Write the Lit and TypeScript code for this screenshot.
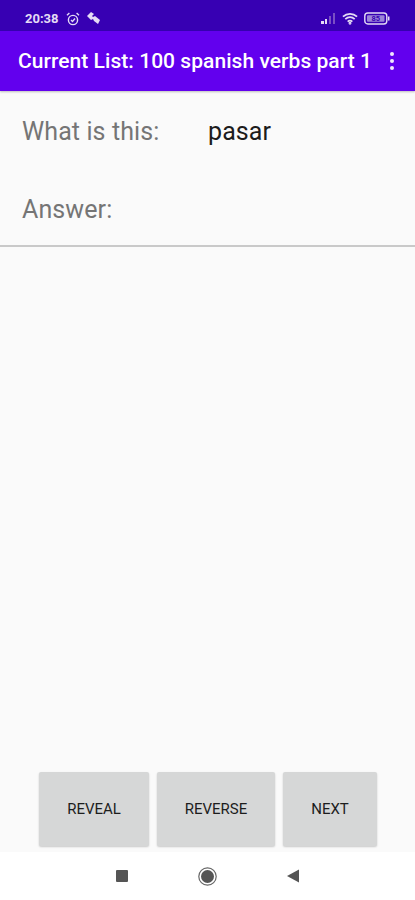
import { LitElement, html, css } from "lit";
import { customElement } from "lit/decorators.js";

@customElement("app-root")
export class AppRoot extends LitElement {
  static styles = css`
    :host {
      display: flex;
      flex-direction: column;
      width: 415px;
      height: 900px;
      background: #fafafa;
      font-family: Roboto, "Liberation Sans", sans-serif;
      overflow: hidden;
    }
    .status {
      height: 31px;
      flex: none;
      box-sizing: border-box;
      background: #3700b3;
      color: #e4dcf5;
      display: flex;
      align-items: center;
      padding: 6px 25px 0 25px;
      font-size: 13px;
      font-weight: 700;
    }
    .status .left { display: flex; align-items: center; flex: 1; gap: 7px; }
    .status .right { display: flex; align-items: center; gap: 6px; }
    .status svg { display: block; }
    .bar {
      height: 60px;
      flex: none;
      box-sizing: border-box;
      background: #6200ee;
      color: #fff;
      display: flex;
      align-items: center;
      justify-content: space-between;
      padding: 0 21px 0 18px;
      font-size: 21px;
      letter-spacing: 0.05px;
      font-weight: 500;
      box-shadow: 0 1px 2px rgba(0, 0, 0, 0.25);
      white-space: nowrap;
    }
    .dots { display: flex; flex-direction: column; gap: 2.500px; }
    .dots i { display: block; width: 4.500px; height: 4.500px; border-radius: 50%; background: #f1e8fd; }
    .form {
      flex: none;
      height: 156px;
      box-sizing: border-box;
      border-bottom: 2px solid #c9c9c9;
      padding: 0 22px;
      font-size: 25px;
      letter-spacing: 0.1px;
      color: #757575;
    }
    .row { display: flex; align-items: center; height: 76px; }
    .row.first { height: 80px; }
    .row .label { width: 186px; flex: none; }
    .row .value { color: #1c1c1c; }
    .spacer { flex: 1; }
    .buttons {
      flex: none;
      display: grid;
      grid-template-columns: 110px 118px 94px;
      gap: 8px;
      padding: 0 0 6px 39px;
    }
    .buttons button {
      height: 74px;
      border: none;
      border-radius: 2px;
      background: #d6d7d7;
      box-shadow: 0 1px 2px rgba(0, 0, 0, 0.2);
      font: 400 15px Roboto, "Liberation Sans", sans-serif;
      color: #1d1d1d;
      padding: 0;
    }
    .nav {
      flex: none;
      height: 48px;
      background: #fff;
      display: flex;
      align-items: center;
      padding-left: 116px;
      gap: 70px;
    }
    .nav svg { display: block; }
  `;

  render() {
    return html`
      <div class="status">
        <div class="left">
          <span>20:38</span>
          <svg width="14" height="14" viewBox="0 0 14 14" fill="none" stroke="#e4dcf5" stroke-width="1.4">
            <circle cx="7" cy="8" r="4.600" />
            <path d="M1 3.200 3.400 1M13 3.200 10.600 1M5 8l1.500 1.500L9 6.500" />
          </svg>
          <svg width="14" height="13" viewBox="0 0 14 13" fill="#e4dcf5">
            <path d="M0 4 4 0l3 2-2 2 1 1 2-1 5 4-2 4-4-3-1-2-2 1z" />
          </svg>
        </div>
        <div class="right">
          <svg width="16" height="13" viewBox="0 0 16 13">
            <path d="M1 12h3V9H1z" fill="#e4dcf5" />
            <path d="M5 12h2V7H5z" fill="#e4dcf5" />
            <path d="M9 12h2V4H9zM13 12h2V1h-2z" fill="#7a4fc4" />
          </svg>
          <svg width="16" height="13" viewBox="0 0 17 13" fill="none" stroke="#e4dcf5" stroke-width="1.9">
            <path d="M1 4.500c4.400-4 10.600-4 15 0M3.500 7.200c3-2.700 7-2.700 10 0M6 9.800c1.500-1.300 3.500-1.300 5 0" />
            <circle cx="8.500" cy="11.500" r=".6" />
          </svg>
          <svg width="26" height="13" viewBox="0 0 26 13">
            <rect x=".8" y="1" width="22" height="11" rx="3" fill="none" stroke="#e4dcf5" stroke-width="1.4" />
            <rect x="3" y="3.200" width="17.500" height="6.600" rx="1" fill="#9c85d8" />
            <text x="11.700" y="9.300" font-size="7.500" font-weight="700" text-anchor="middle" fill="#3700b3">85</text>
            <rect x="24" y="4.500" width="1.500" height="4" fill="#e4dcf5" />
          </svg>
        </div>
      </div>
      <div class="bar">
        <span>Current List: 100 spanish verbs part 1</span>
        <div class="dots"><i></i><i></i><i></i></div>
      </div>
      <div class="form">
        <div class="row first"><span class="label">What is this:</span><span class="value">pasar</span></div>
        <div class="row"><span class="label">Answer:</span></div>
      </div>
      <div class="spacer"></div>
      <div class="buttons">
        <button>REVEAL</button>
        <button>REVERSE</button>
        <button>NEXT</button>
      </div>
      <div class="nav">
        <svg width="12" height="12" viewBox="0 0 12 12"><rect width="12" height="12" rx="1" fill="#555" /></svg>
        <svg width="19" height="19" viewBox="0 0 19 19">
          <circle cx="9.500" cy="9.500" r="8.700" fill="none" stroke="#666" stroke-width="1.200" />
          <circle cx="9.500" cy="9.500" r="6.500" fill="#555" />
        </svg>
        <svg width="12" height="14" viewBox="0 0 13 14"><path d="M13 0v14L0 7z" fill="#555" /></svg>
      </div>
    `;
  }
}
